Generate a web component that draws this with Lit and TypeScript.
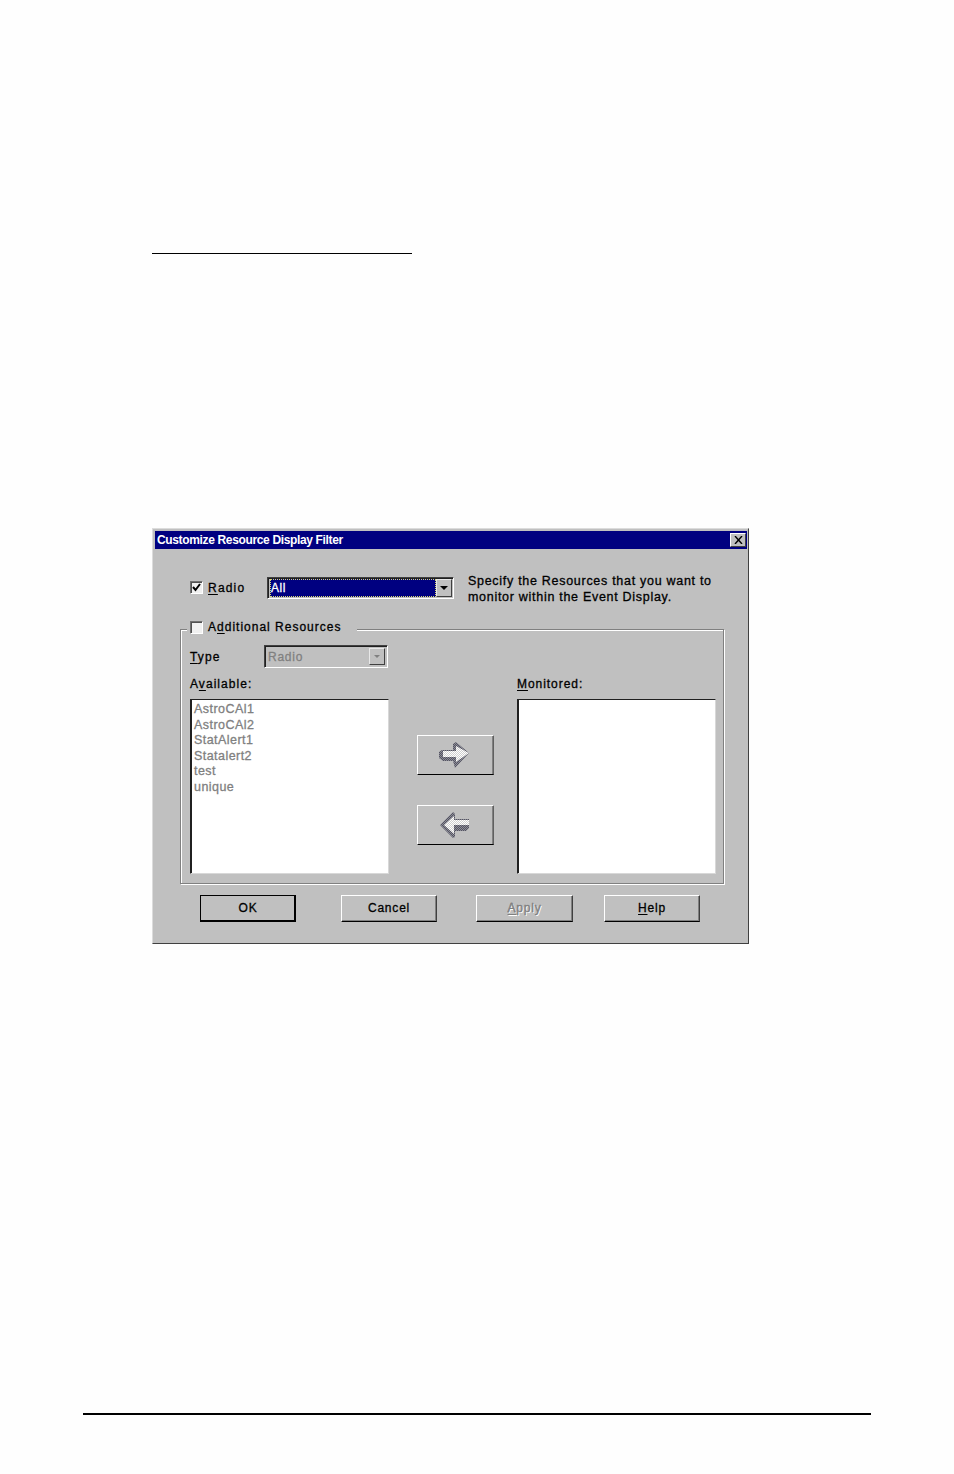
import { LitElement, html, css } from "lit";
import { customElement } from "lit/decorators.js";

@customElement("app-root")
export class AppRoot extends LitElement {
  static styles = css`
    :host { display: block; width: 954px; height: 1474px; background: #fefefe; overflow: hidden;
      font-family: "Liberation Sans", Arial, sans-serif; font-size: 12px; color: #000; letter-spacing: .55px; }
    * { box-sizing: border-box; }
    .page { display: flex; flex-direction: column; height: 100%; }
    .rule { width: 260px; height: 1px; background: #000; margin: 253px 0 0 152px; }
    .dialog { width: 597px; height: 416px; margin: 274px 0 0 152px; background: #c0c0c0; padding: 2px 1px 2px 2px;
      border: 1px solid; border-color: #dcdcdc #404040 #404040 #dcdcdc; display: flex; flex-direction: column; }
    .title { height: 18px; flex: none; background: #000080; color: #fff; font-weight: 700; font-size: 12px; letter-spacing: -.35px;
      display: flex; align-items: center; justify-content: space-between; padding: 0 1px 0 2px; }
    .close { width: 16px; height: 14px; background: #c0c0c0; display: grid; place-items: center;
      border: 1px solid; border-color: #fff #404040 #404040 #fff; }
    .body { flex: 1; padding: 29px 0 0 35px; display: flex; flex-direction: column; }
    .top { display: flex; align-items: flex-start; height: 21px; }
    .t { -webkit-text-stroke: .3px currentColor; }
    .check { width: 13px; height: 13px; background: #f0f0f0; flex: none; display: grid; place-items: center;
      border: 1px solid; border-color: #707070 #fff #fff #707070; box-shadow: inset 1px 1px 0 #505050; }
    .radio { display: flex; align-items: center; gap: 5px; width: 77px; height: 19px; letter-spacing: 1.2px; }
    u { text-underline-offset: 1.5px; }
    .combo { height: 21px; display: flex; align-items: stretch; padding: 2px;
      border: 1px solid; border-color: #404040 #fff #fff #404040; box-shadow: inset 1px 1px 0 #202020; background: #c0c0c0; }
    .combo.main { width: 187px; height: 22px; margin-top: -1px; padding: 1px 1px 1px 2px; }
    .sel { flex: 1; background: #000080; color: #fff; padding-left: 1px; line-height: 18px; outline: 1px dotted #d8d870; outline-offset: -1px; letter-spacing: .6px; }
    .drop { width: 16px; flex: none; display: grid; place-items: center; background: #c0c0c0;
      border: 1px solid; border-color: #e8e8e8 #404040 #404040 #e8e8e8; }
    .desc { margin: -4px 0 0 14px; line-height: 15.5px; font-size: 12.5px; letter-spacing: .71px; }
    .group { position: relative; width: 544px; height: 255px; margin: 30px 0 0 -10px; flex: none;
      border: 1px solid #808080; box-shadow: 1px 1px 0 #fff, inset 1px 1px 0 #fff; padding: 15px 0 0 9px; display: flex; flex-direction: column; }
    .legend { position: absolute; left: 6px; top: -10px; height: 14px; padding: 0 16px 0 3px; background: #c0c0c0; display: flex; align-items: center; gap: 5px; letter-spacing: 1px; }
    .typerow { display: flex; align-items: center; height: 23px; }
    .typerow .lab { width: 74px; letter-spacing: 1.1px; }
    .combo.dis { width: 124px; height: 23px; }
    .dis .val { flex: 1; color: #808080; line-height: 19px; padding-left: 1px; letter-spacing: .75px; }
    .lists { display: grid; grid-template-columns: 199px 128px 199px; margin-top: 9px; }
    .col { display: flex; flex-direction: column; }
    .col .cap { height: 22px; line-height: 14px; letter-spacing: 1.05px; }
    .col .cap.mon { letter-spacing: .95px; }
    .list { height: 175px; width: 199px; background: #fff; padding: 2px 3px; border: 1px solid; border-color: #202020 #d8d8d8 #d8d8d8 #202020;
      color: #808080; line-height: 15.5px; box-shadow: inset 1px 0 0 #202020; font-size: 12.5px; letter-spacing: .45px; }
    .mid { display: flex; flex-direction: column; gap: 30px; padding: 58px 0 0 28px; }
    .arrow { width: 77px; height: 40px; background: #c0c0c0; display: grid; place-items: center;
      border: 1px solid; border-color: #fff #606060 #000 #fff; box-shadow: inset -1px 0 0 #808080; }
    .arrow svg { margin-right: 3px; }
    .actions { height: 27px; margin: 11px 0 0 10px; display: grid; grid-template-columns: 141px 135px 128px 96px; }
    .btn { height: 27px; background: #c0c0c0; display: flex; align-items: center; justify-content: center; border: 1px solid; padding-bottom: 2px;
      border-color: #fff #404040 #000 #fff; box-shadow: inset -1px -1px 0 #808080; font-size: 12px; letter-spacing: .8px; }
    .b96 { width: 96px; }
    .b97 { width: 97px; }
    .def { border-color: #000; box-shadow: inset -1px -1px 0 #000; }
    .off { color: #808080; text-shadow: 1px 1px 0 #fff; }
    .spacer { flex: 1; }
    .foot { height: 2px; width: 788px; background: #000; margin: 0 0 59px 83px; }
  `;

  private chk(on: boolean) {
    return html`<span class="check">${on ? html`<svg width="9" height="9" viewBox="0 0 9 9"><path d="M1 4l2.5 3L8 1" fill="none" stroke="#000" stroke-width="2"/></svg>` : ""}</span>`;
  }

  private tri(c: string, w: number) {
    return html`<svg width="${w}" height="${Math.ceil(w / 2)}" viewBox="0 0 8 4"><path d="M0 0h8L4 4z" fill="${c}"/></svg>`;
  }

  private arrow(id: string, shadow: string, face: string) {
    return html`<div class="arrow"><svg width="32" height="28" viewBox="0 0 32 28">
      <defs>
        <pattern id="${id}d" width="2" height="2" patternUnits="userSpaceOnUse"><rect width="2" height="2" fill="#8c8c98"/><rect width="1" height="1" fill="#545460"/><rect x="1" y="1" width="1" height="1" fill="#545460"/></pattern>
        <pattern id="${id}l" width="2" height="2" patternUnits="userSpaceOnUse"><rect width="2" height="2" fill="#fff"/><rect width="1" height="1" fill="#d0d0d0"/><rect x="1" y="1" width="1" height="1" fill="#d0d0d0"/></pattern>
      </defs>
      <polygon points="${shadow}" fill="url(#${id}d)"/>
      <polygon points="${face}" fill="url(#${id}l)"/></svg></div>`;
  }

  render() {
    const items = ["AstroCAl1", "AstroCAl2", "StatAlert1", "Statalert2", "test", "unique"];
    return html`<div class="page">
      <div class="rule"></div>
      <div class="dialog">
        <div class="title"><span>Customize Resource Display Filter</span>
          <span class="close"><svg width="9" height="8" viewBox="0 0 9 8"><path d="M1 0l7 8M8 0l-7 8" stroke="#000" stroke-width="1.4"/></svg></span>
        </div>
        <div class="body">
          <div class="top">
            <label class="radio">${this.chk(true)}<span class="t"><u>R</u>adio</span></label>
            <div class="combo main"><div class="sel t">All</div><div class="drop">${this.tri("#000", 8)}</div></div>
            <div class="desc t">Specify the Resources that you want to<br />monitor within the Event Display.</div>
          </div>
          <div class="group">
            <div class="legend">${this.chk(false)}<span class="t">A<u>d</u>ditional Resources</span></div>
            <div class="typerow"><span class="lab t"><u>T</u>ype</span>
              <div class="combo dis"><div class="val t">Radio</div><div class="drop">${this.tri("#808080", 6)}</div></div>
            </div>
            <div class="lists">
              <div class="col"><span class="cap t">A<u>v</u>ailable:</span>
                <div class="list t">${items.map((i) => html`<div>${i}</div>`)}</div></div>
              <div class="mid">
                ${this.arrow("r", "1,11 4,9 15,9 15,3 18,1 31,12 17,27 15,20 5,20 1,17", "5,10 18,10 18,5 31,12 18,21 18,16 5,16")}
                ${this.arrow("a", "2,14 15,1 17,3 17,8 31,8 31,17 28,20 17,20 17,26 15,27", "6,14 16,5 16,9 31,9 31,14 16,14 16,23")}
              </div>
              <div class="col"><span class="cap mon t"><u>M</u>onitored:</span><div class="list"></div></div>
            </div>
          </div>
          <div class="actions">
            <div class="btn b96 def t">OK</div>
            <div class="btn b96 t">Cancel</div>
            <div class="btn b97 off t"><u>A</u>pply</div>
            <div class="btn b96 t"><u>H</u>elp</div>
          </div>
        </div>
      </div>
      <div class="spacer"></div>
      <div class="foot"></div>
    </div>`;
  }
}
